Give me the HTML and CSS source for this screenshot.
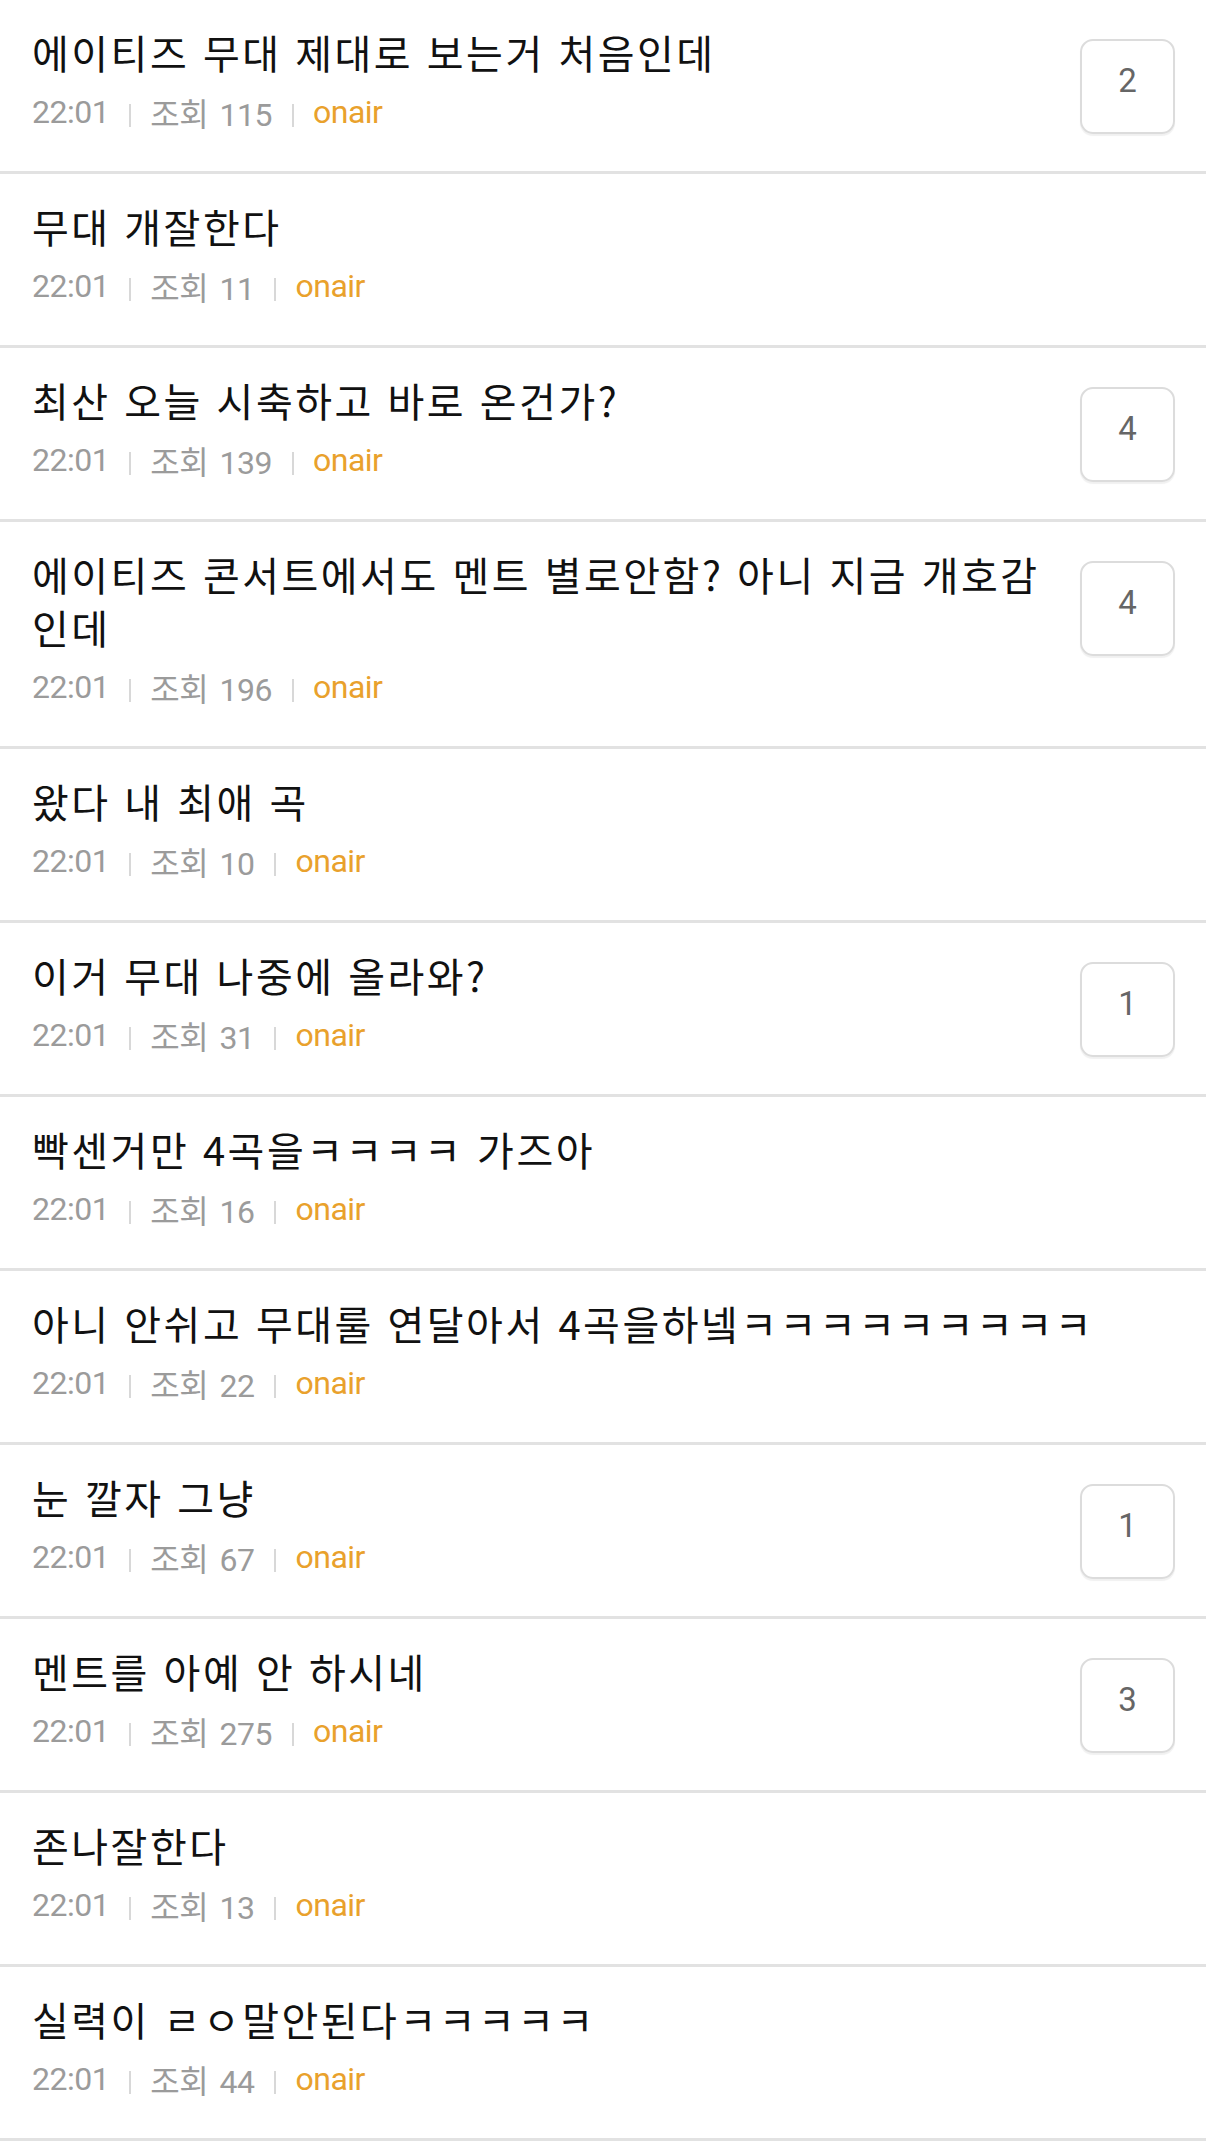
FILE: index.html
```html
<!DOCTYPE html>
<html lang="ko">
<head>
  <meta charset="UTF-8">
  <meta name="viewport" content="width=device-width, initial-scale=1.0">
  <title>게시판</title>
  <link rel="stylesheet" href="styles.css">
</head>
<body>
  <ul class="post-list">
    <li class="post">
      <div class="post-body">
        <p class="post-title">에이티즈 무대 제대로 보는거 처음인데</p>
        <div class="post-meta"><span>22:01</span><i class="sep"></i><span>조회 115</span><i class="sep"></i><span class="cat">onair</span></div>
      </div>
      <span class="reply-count">2</span>
    </li>
    <li class="post">
      <div class="post-body">
        <p class="post-title">무대 개잘한다</p>
        <div class="post-meta"><span>22:01</span><i class="sep"></i><span>조회 11</span><i class="sep"></i><span class="cat">onair</span></div>
      </div>
    </li>
    <li class="post">
      <div class="post-body">
        <p class="post-title">최산 오늘 시축하고 바로 온건가?</p>
        <div class="post-meta"><span>22:01</span><i class="sep"></i><span>조회 139</span><i class="sep"></i><span class="cat">onair</span></div>
      </div>
      <span class="reply-count">4</span>
    </li>
    <li class="post">
      <div class="post-body">
        <p class="post-title">에이티즈 콘서트에서도 멘트 별로안함? 아니 지금 개호감인데</p>
        <div class="post-meta"><span>22:01</span><i class="sep"></i><span>조회 196</span><i class="sep"></i><span class="cat">onair</span></div>
      </div>
      <span class="reply-count">4</span>
    </li>
    <li class="post">
      <div class="post-body">
        <p class="post-title">왔다 내 최애 곡</p>
        <div class="post-meta"><span>22:01</span><i class="sep"></i><span>조회 10</span><i class="sep"></i><span class="cat">onair</span></div>
      </div>
    </li>
    <li class="post">
      <div class="post-body">
        <p class="post-title">이거 무대 나중에 올라와?</p>
        <div class="post-meta"><span>22:01</span><i class="sep"></i><span>조회 31</span><i class="sep"></i><span class="cat">onair</span></div>
      </div>
      <span class="reply-count">1</span>
    </li>
    <li class="post">
      <div class="post-body">
        <p class="post-title">빡센거만 4곡을ㅋㅋㅋㅋ 가즈아</p>
        <div class="post-meta"><span>22:01</span><i class="sep"></i><span>조회 16</span><i class="sep"></i><span class="cat">onair</span></div>
      </div>
    </li>
    <li class="post">
      <div class="post-body">
        <p class="post-title">아니 안쉬고 무대룰 연달아서 4곡을하넼ㅋㅋㅋㅋㅋㅋㅋㅋㅋ</p>
        <div class="post-meta"><span>22:01</span><i class="sep"></i><span>조회 22</span><i class="sep"></i><span class="cat">onair</span></div>
      </div>
    </li>
    <li class="post">
      <div class="post-body">
        <p class="post-title">눈 깔자 그냥</p>
        <div class="post-meta"><span>22:01</span><i class="sep"></i><span>조회 67</span><i class="sep"></i><span class="cat">onair</span></div>
      </div>
      <span class="reply-count">1</span>
    </li>
    <li class="post">
      <div class="post-body">
        <p class="post-title">멘트를 아예 안 하시네</p>
        <div class="post-meta"><span>22:01</span><i class="sep"></i><span>조회 275</span><i class="sep"></i><span class="cat">onair</span></div>
      </div>
      <span class="reply-count">3</span>
    </li>
    <li class="post">
      <div class="post-body">
        <p class="post-title">존나잘한다</p>
        <div class="post-meta"><span>22:01</span><i class="sep"></i><span>조회 13</span><i class="sep"></i><span class="cat">onair</span></div>
      </div>
    </li>
    <li class="post">
      <div class="post-body">
        <p class="post-title">실력이 ㄹㅇ말안된다ㅋㅋㅋㅋㅋ</p>
        <div class="post-meta"><span>22:01</span><i class="sep"></i><span>조회 44</span><i class="sep"></i><span class="cat">onair</span></div>
      </div>
    </li>
  </ul>
</body>
</html>
```

FILE: styles.css
```css
body {
  margin: 0;
  padding: 0;
  background-color: #fff;
  color: #111;
  font-family: "Noto Sans CJK KR", "Noto Sans", sans-serif;
}

.post-list {
  list-style: none;
  margin: 0;
  padding: 0;
}

.post {
  display: flex;
  align-items: flex-start;
  gap: 30px;
  padding: 26px 31px 37px 32px;
  border-bottom: 3px solid #e2e2e2;
}

.post-body {
  flex: 1;
  min-width: 0;
}

.post-title {
  margin: 0;
  font-size: 40px;
  line-height: 53px;
  letter-spacing: 2.5px;
  color: #111;
}

.post-meta {
  display: flex;
  align-items: center;
  margin-top: 11px;
  height: 44px;
  font-family: Roboto, "Noto Sans CJK KR", sans-serif;
  font-size: 32px;
  letter-spacing: -0.5px;
  word-spacing: 4px;
  color: #9b9b9b;
}

.sep {
  display: block;
  width: 2px;
  height: 23px;
  margin: 6px 19px 0 20px;
  background-color: #d8d8d8;
}

.cat {
  color: #e9a12c;
}

.reply-count {
  flex: none;
  box-sizing: border-box;
  width: 95px;
  height: 95px;
  margin-top: 13px;
  padding-top: 20px;
  border: 2px solid #dcdcdc;
  border-radius: 13px;
  box-shadow: 0 2px 1px rgba(0, 0, 0, 0.06);
  text-align: center;
  font-family: Roboto, sans-serif;
  font-size: 33px;
  line-height: 40px;
  color: #666;
}
```
